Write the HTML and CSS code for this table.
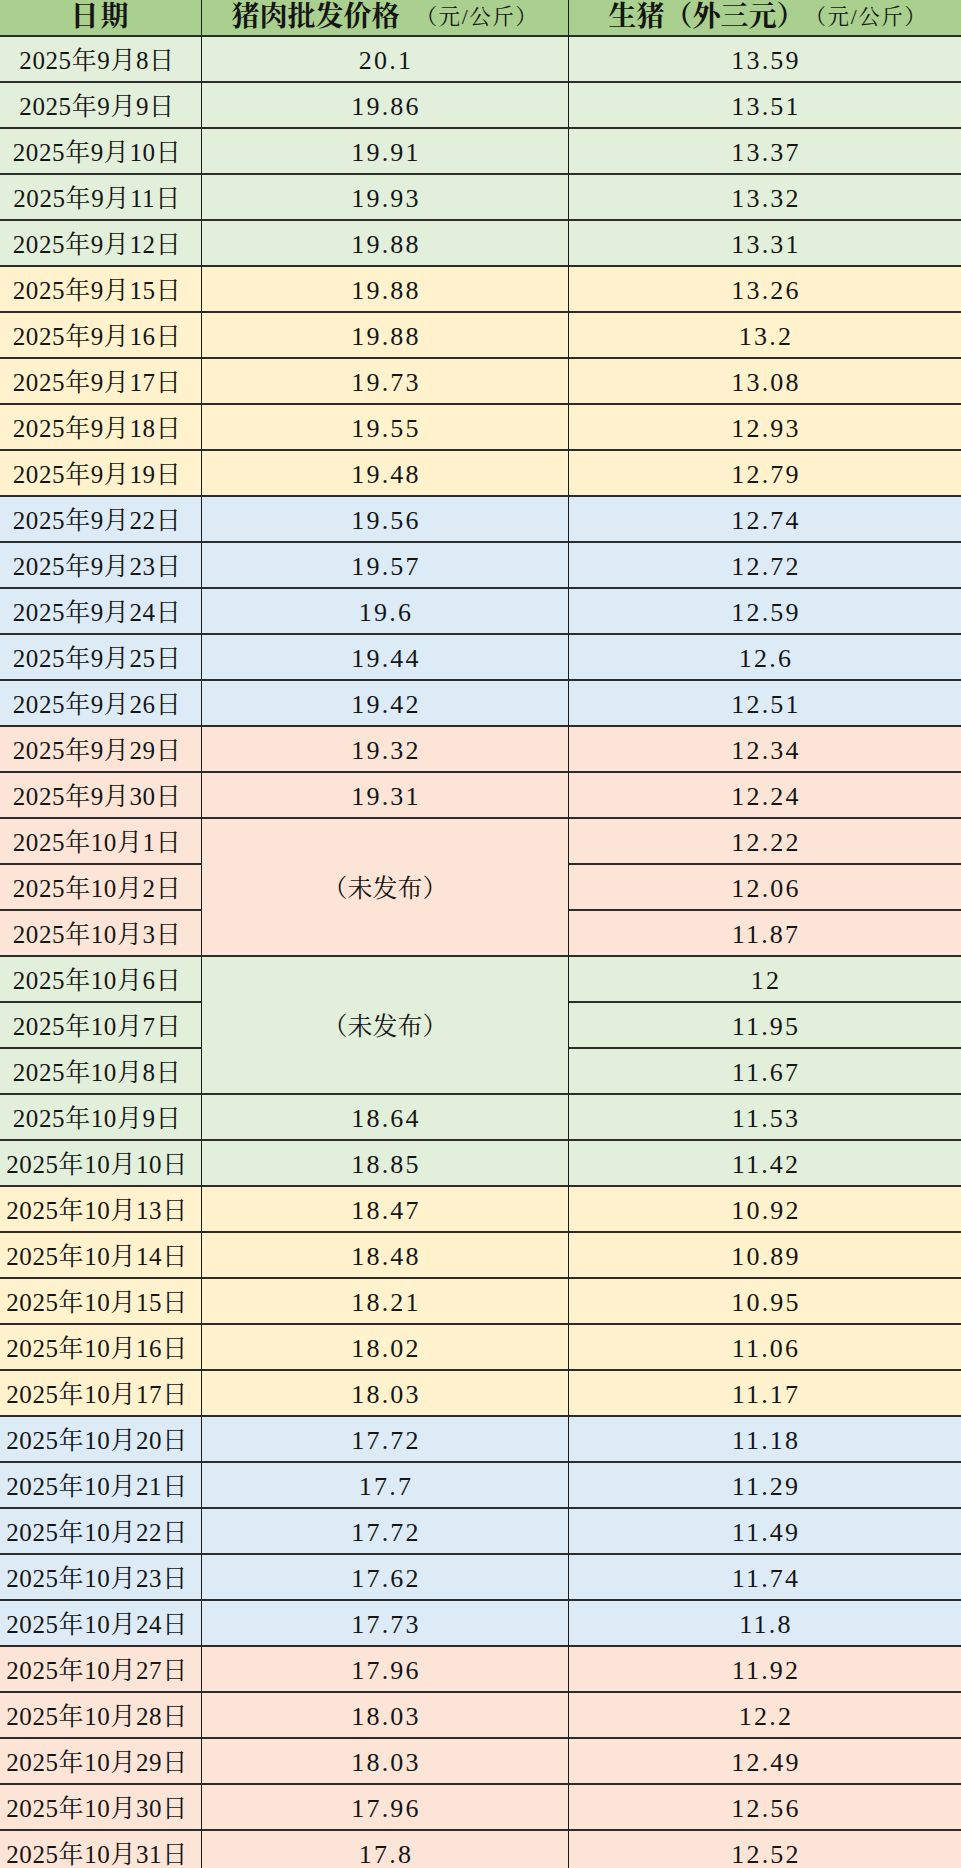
FILE: index.html
```html
<!DOCTYPE html>
<html lang="zh-CN">
<head>
<meta charset="utf-8">
<title>猪肉批发价格与生猪价格</title>
<link rel="stylesheet" href="styles.css">
</head>
<body>
<div class="sheet">
  <div class="cell head c1">日期</div>
  <div class="cell head c2">猪肉批发价格<span class="unit unit-gap">（元/公斤）</span></div>
  <div class="cell head c3">生猪（外三元）<span class="unit">（元/公斤）</span></div>

  <div class="cell g c1 date">2025年9月8日</div><div class="cell g c2 num">20.1</div><div class="cell g c3 num">13.59</div>
  <div class="cell g c1 date">2025年9月9日</div><div class="cell g c2 num">19.86</div><div class="cell g c3 num">13.51</div>
  <div class="cell g c1 date">2025年9月10日</div><div class="cell g c2 num">19.91</div><div class="cell g c3 num">13.37</div>
  <div class="cell g c1 date">2025年9月11日</div><div class="cell g c2 num">19.93</div><div class="cell g c3 num">13.32</div>
  <div class="cell g c1 date">2025年9月12日</div><div class="cell g c2 num">19.88</div><div class="cell g c3 num">13.31</div>

  <div class="cell y c1 date">2025年9月15日</div><div class="cell y c2 num">19.88</div><div class="cell y c3 num">13.26</div>
  <div class="cell y c1 date">2025年9月16日</div><div class="cell y c2 num">19.88</div><div class="cell y c3 num">13.2</div>
  <div class="cell y c1 date">2025年9月17日</div><div class="cell y c2 num">19.73</div><div class="cell y c3 num">13.08</div>
  <div class="cell y c1 date">2025年9月18日</div><div class="cell y c2 num">19.55</div><div class="cell y c3 num">12.93</div>
  <div class="cell y c1 date">2025年9月19日</div><div class="cell y c2 num">19.48</div><div class="cell y c3 num">12.79</div>

  <div class="cell b c1 date">2025年9月22日</div><div class="cell b c2 num">19.56</div><div class="cell b c3 num">12.74</div>
  <div class="cell b c1 date">2025年9月23日</div><div class="cell b c2 num">19.57</div><div class="cell b c3 num">12.72</div>
  <div class="cell b c1 date">2025年9月24日</div><div class="cell b c2 num">19.6</div><div class="cell b c3 num">12.59</div>
  <div class="cell b c1 date">2025年9月25日</div><div class="cell b c2 num">19.44</div><div class="cell b c3 num">12.6</div>
  <div class="cell b c1 date">2025年9月26日</div><div class="cell b c2 num">19.42</div><div class="cell b c3 num">12.51</div>

  <div class="cell p c1 date">2025年9月29日</div><div class="cell p c2 num">19.32</div><div class="cell p c3 num">12.34</div>
  <div class="cell p c1 date">2025年9月30日</div><div class="cell p c2 num">19.31</div><div class="cell p c3 num">12.24</div>
  <div class="cell p c1 date">2025年10月1日</div><div class="cell p c2 span3 note">（未发布）</div><div class="cell p c3 num">12.22</div>
  <div class="cell p c1 date">2025年10月2日</div><div class="cell p c3 num">12.06</div>
  <div class="cell p c1 date">2025年10月3日</div><div class="cell p c3 num">11.87</div>

  <div class="cell g c1 date">2025年10月6日</div><div class="cell g c2 span3 note">（未发布）</div><div class="cell g c3 num">12</div>
  <div class="cell g c1 date">2025年10月7日</div><div class="cell g c3 num">11.95</div>
  <div class="cell g c1 date">2025年10月8日</div><div class="cell g c3 num">11.67</div>
  <div class="cell g c1 date">2025年10月9日</div><div class="cell g c2 num">18.64</div><div class="cell g c3 num">11.53</div>
  <div class="cell g c1 date">2025年10月10日</div><div class="cell g c2 num">18.85</div><div class="cell g c3 num">11.42</div>

  <div class="cell y c1 date">2025年10月13日</div><div class="cell y c2 num">18.47</div><div class="cell y c3 num">10.92</div>
  <div class="cell y c1 date">2025年10月14日</div><div class="cell y c2 num">18.48</div><div class="cell y c3 num">10.89</div>
  <div class="cell y c1 date">2025年10月15日</div><div class="cell y c2 num">18.21</div><div class="cell y c3 num">10.95</div>
  <div class="cell y c1 date">2025年10月16日</div><div class="cell y c2 num">18.02</div><div class="cell y c3 num">11.06</div>
  <div class="cell y c1 date">2025年10月17日</div><div class="cell y c2 num">18.03</div><div class="cell y c3 num">11.17</div>

  <div class="cell b c1 date">2025年10月20日</div><div class="cell b c2 num">17.72</div><div class="cell b c3 num">11.18</div>
  <div class="cell b c1 date">2025年10月21日</div><div class="cell b c2 num">17.7</div><div class="cell b c3 num">11.29</div>
  <div class="cell b c1 date">2025年10月22日</div><div class="cell b c2 num">17.72</div><div class="cell b c3 num">11.49</div>
  <div class="cell b c1 date">2025年10月23日</div><div class="cell b c2 num">17.62</div><div class="cell b c3 num">11.74</div>
  <div class="cell b c1 date">2025年10月24日</div><div class="cell b c2 num">17.73</div><div class="cell b c3 num">11.8</div>

  <div class="cell p c1 date">2025年10月27日</div><div class="cell p c2 num">17.96</div><div class="cell p c3 num">11.92</div>
  <div class="cell p c1 date">2025年10月28日</div><div class="cell p c2 num">18.03</div><div class="cell p c3 num">12.2</div>
  <div class="cell p c1 date">2025年10月29日</div><div class="cell p c2 num">18.03</div><div class="cell p c3 num">12.49</div>
  <div class="cell p c1 date">2025年10月30日</div><div class="cell p c2 num">17.96</div><div class="cell p c3 num">12.56</div>
  <div class="cell p c1 date">2025年10月31日</div><div class="cell p c2 num">17.8</div><div class="cell p c3 num">12.52</div>
</div>
</body>
</html>
```

FILE: styles.css
```css
html, body {
  margin: 0;
  padding: 0;
  overflow: hidden;
  background: #fce4d6;
}

body {
  font-family: "Liberation Serif", "Noto Serif CJK SC", "Noto Sans CJK SC", serif;
  color: #151515;
}

.sheet {
  display: grid;
  grid-template-columns: 202px 367px 392px;
  grid-template-rows: 37px;
  grid-auto-rows: 46px;
  width: 961px;
}

.cell {
  box-sizing: border-box;
  display: flex;
  align-items: center;
  justify-content: center;
  white-space: nowrap;
  border-right: 1px solid #1a1a1a;
  border-bottom: 2px solid #2c2c2c;
  line-height: 1;
}

.c1 { grid-column: 1; }
.c2 { grid-column: 2; }
.c3 { grid-column: 3; border-right: none; }

.span3 { grid-row: span 3; }

.head {
  background: #a9d08e;
  font-weight: 700;
  font-size: 28px;
  padding-bottom: 2px;
}

.head.c1 {
  letter-spacing: 2px;
}

.head.c3 {
  padding-left: 6px;
}

.unit {
  font-weight: 400;
  font-size: 21.5px;
  letter-spacing: 1.6px;
  padding-top: 2px;
}

.unit-gap {
  margin-left: 16px;
}

.date {
  font-size: 25px;
  letter-spacing: 0.6px;
  padding-top: 3px;
  padding-right: 7px;
}

.num {
  font-size: 26px;
  letter-spacing: 2.2px;
  padding-top: 3px;
  padding-left: 2px;
}

.note {
  font-size: 25px;
  padding-top: 2px;
}

.g { background: #e2efda; }
.y { background: #fff2cc; }
.b { background: #ddebf7; }
.p { background: #fce4d6; }
```
